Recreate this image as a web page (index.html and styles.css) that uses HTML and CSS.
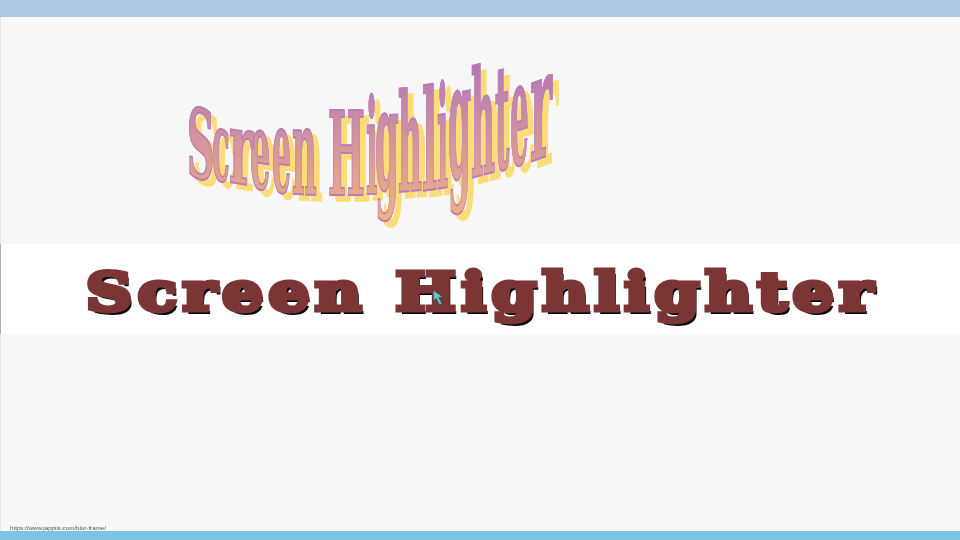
FILE: index.html
```html
<!DOCTYPE html>
<html lang="en">
<head>
<meta charset="utf-8">
<title>Screen Highlighter</title>
<link rel="stylesheet" href="styles.css">
</head>
<body>
<div class="top-bar"></div>
<main class="stage">
  <section class="art">
    <svg class="art-svg" width="960" height="227" viewBox="0 17 960 227" aria-label="Screen Highlighter">
      <defs>
        <linearGradient id="wordGrad" gradientUnits="userSpaceOnUse" x1="0" y1="65" x2="0" y2="225">
          <stop offset="0" stop-color="#b677b9"/>
          <stop offset="1" stop-color="#f4b47e"/>
        </linearGradient>
        <g id="word" class="word">
          <text transform="translate(187 176) skewY(10) scale(.38 .96)">S</text>
          <text transform="translate(212 179) skewY(10) scale(.29 .97)">c</text>
          <text transform="translate(229 182) skewY(9) scale(.46 1.02)">r</text>
          <text transform="translate(250 187) skewY(9) scale(.32 1.09)">e</text>
          <text transform="translate(272 191) skewY(6) scale(.3 1.18)">e</text>
          <text transform="translate(292 194) skewY(2) scale(.34 1.23)">n</text>
          <text transform="translate(328 195) skewY(0) scale(.39 1.16)">H</text>
          <text transform="translate(366 194) skewY(-2) scale(.3 1.32)">i</text>
          <text transform="translate(375 190) skewY(-3) scale(.34 1.43)">g</text>
          <text transform="translate(398 192) skewY(-5) scale(.33 1.36)">h</text>
          <text transform="translate(422 191) skewY(-8) scale(.4 1.39)">l</text>
          <text transform="translate(437 189) skewY(-10) scale(.29 1.42)">i</text>
          <text transform="translate(448 180) skewY(-12) scale(.33 1.64)">g</text>
          <text transform="translate(471 178) skewY(-15) scale(.33 1.47)">h</text>
          <text transform="translate(495 171) skewY(-16) scale(.31 1.46)">t</text>
          <text transform="translate(510 167) skewY(-17) scale(.295 1.46)">e</text>
          <text transform="translate(530 162) skewY(-20) scale(.42 1.5)">r</text>
        </g>
        <mask id="wordMask" maskUnits="userSpaceOnUse" x="0" y="17" width="960" height="227">
          <use href="#word" class="mask-fill"/>
        </mask>
      </defs>
      <use href="#word" class="shadow-fill" x="6" y="6"/>
      <rect x="150" y="40" width="430" height="200" fill="url(#wordGrad)" mask="url(#wordMask)"/>
      <use href="#word" class="outline"/>
    </svg>
  </section>
  <section class="band">
    <h1 class="slab">Screen Highlighter</h1>
    <svg class="cursor" width="13" height="18" viewBox="0 0 13 18" aria-hidden="true">
      <path d="M1 1 L1.5 12 L4.2 9.6 L7.5 16 L10 14.6 L6.8 8.6 L11 8 Z" fill="#6fc4c0" stroke="#2c4d58" stroke-width=".8"/>
    </svg>
  </section>
  <section class="rest">
    <span class="url">https://www.jappiis.com/blur-frame/</span>
  </section>
</main>
<div class="bottom-bar"></div>
</body>
</html>
```
FILE: styles.css
```css
* { box-sizing: border-box; }
html, body { margin: 0; padding: 0; }
body {
  width: 960px;
  height: 540px;
  overflow: hidden;
  display: flex;
  flex-direction: column;
  background: #f7f7f7;
  font-family: "Liberation Sans", Arial, sans-serif;
}
.top-bar { height: 17px; background: #afc7e0; flex: none; }
.bottom-bar { height: 9px; background: #7cc4e2; flex: none; }
.stage { flex: 1; display: flex; flex-direction: column; border-left: 1px solid #e4e4e4; }
.art { height: 227px; flex: none; margin-left: -1px; }
.art-svg { display: block; filter: blur(.4px); }
.word {
  font-family: "DejaVu Serif", serif;
  font-weight: 700;
  font-size: 100px;
}
.word text { vector-effect: non-scaling-stroke; }
.mask-fill { fill: #fff; stroke: #fff; stroke-width: 1.2px; }
.shadow-fill { fill: #fbdc78; stroke: #fbdc78; stroke-width: 1.2px; }
.outline { fill: none; stroke: #b67cbc; stroke-width: 1.4px; }
.band {
  height: 90px;
  flex: none;
  background: #fff;
  position: relative;
  display: flex;
  align-items: center;
  padding-left: 85px;
  border-left: 1px solid #b0b0b0;
  margin-left: -1px;
}
.slab {
  margin: 5px 0 0;
  font-family: "DejaVu Serif", serif;
  font-weight: 700;
  font-size: 53px;
  line-height: 1;
  letter-spacing: 5px;
  white-space: nowrap;
  color: #7b3535;
  -webkit-text-stroke: 5px #7b3535;
  text-shadow: 3px 3.5px 0 #000;
  transform: scaleX(1.2);
  transform-origin: left center;
  filter: blur(.35px);
}
.cursor { position: absolute; left: 431px; top: 45px; }
.rest { flex: 1; display: flex; align-items: flex-end; padding-left: 9px; }
.url { font-size: 6.2px; line-height: 8px; color: #555; margin-bottom: -1px; filter: blur(.25px); }
```
